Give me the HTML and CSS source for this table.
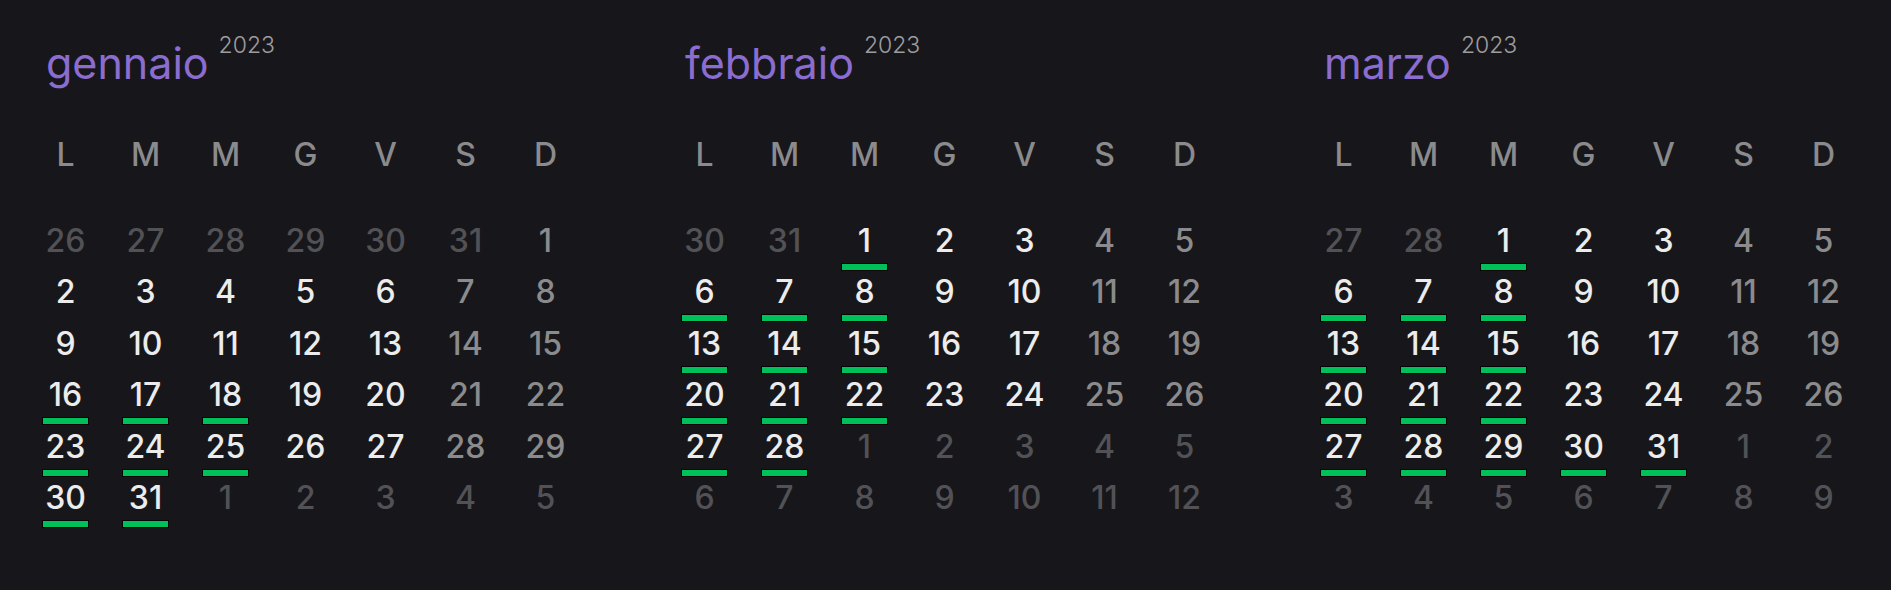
FILE: index.html
```html
<!DOCTYPE html>
<html lang="it">
<head>
    <meta charset="UTF-8">
    <meta name="viewport" content="width=device-width, initial-scale=1.0">
    <title>Calendario 2023</title>
    <link rel="stylesheet" href="styles.css">
</head>
<body>

<div class="months">

    <!-- Gennaio -->
    <div class="month">
        <div class="month-head">
            <div class="month-name">gennaio</div>
            <div class="month-year">2023</div>
        </div>
        <div class="weekdays">
            <span>L</span><span>M</span><span>M</span><span>G</span><span>V</span><span>S</span><span>D</span>
        </div>
        <div class="days">
            <span class="day other">26</span><span class="day other">27</span><span class="day other">28</span><span class="day other">29</span><span class="day other">30</span><span class="day other">31</span><span class="day weekend">1</span>
            <span class="day">2</span><span class="day">3</span><span class="day">4</span><span class="day">5</span><span class="day">6</span><span class="day weekend">7</span><span class="day weekend">8</span>
            <span class="day">9</span><span class="day">10</span><span class="day">11</span><span class="day">12</span><span class="day">13</span><span class="day weekend">14</span><span class="day weekend">15</span>
            <span class="day marked">16</span><span class="day marked">17</span><span class="day marked">18</span><span class="day">19</span><span class="day">20</span><span class="day weekend">21</span><span class="day weekend">22</span>
            <span class="day marked">23</span><span class="day marked">24</span><span class="day marked">25</span><span class="day">26</span><span class="day">27</span><span class="day weekend">28</span><span class="day weekend">29</span>
            <span class="day marked">30</span><span class="day marked">31</span><span class="day other">1</span><span class="day other">2</span><span class="day other">3</span><span class="day other">4</span><span class="day other">5</span>
        </div>
    </div>

    <!-- Febbraio -->
    <div class="month">
        <div class="month-head">
            <div class="month-name">febbraio</div>
            <div class="month-year">2023</div>
        </div>
        <div class="weekdays">
            <span>L</span><span>M</span><span>M</span><span>G</span><span>V</span><span>S</span><span>D</span>
        </div>
        <div class="days">
            <span class="day other">30</span><span class="day other">31</span><span class="day marked">1</span><span class="day">2</span><span class="day">3</span><span class="day weekend">4</span><span class="day weekend">5</span>
            <span class="day marked">6</span><span class="day marked">7</span><span class="day marked">8</span><span class="day">9</span><span class="day">10</span><span class="day weekend">11</span><span class="day weekend">12</span>
            <span class="day marked">13</span><span class="day marked">14</span><span class="day marked">15</span><span class="day">16</span><span class="day">17</span><span class="day weekend">18</span><span class="day weekend">19</span>
            <span class="day marked">20</span><span class="day marked">21</span><span class="day marked">22</span><span class="day">23</span><span class="day">24</span><span class="day weekend">25</span><span class="day weekend">26</span>
            <span class="day marked">27</span><span class="day marked">28</span><span class="day other">1</span><span class="day other">2</span><span class="day other">3</span><span class="day other">4</span><span class="day other">5</span>
            <span class="day other">6</span><span class="day other">7</span><span class="day other">8</span><span class="day other">9</span><span class="day other">10</span><span class="day other">11</span><span class="day other">12</span>
        </div>
    </div>

    <!-- Marzo -->
    <div class="month">
        <div class="month-head">
            <div class="month-name">marzo</div>
            <div class="month-year">2023</div>
        </div>
        <div class="weekdays">
            <span>L</span><span>M</span><span>M</span><span>G</span><span>V</span><span>S</span><span>D</span>
        </div>
        <div class="days">
            <span class="day other">27</span><span class="day other">28</span><span class="day marked">1</span><span class="day">2</span><span class="day">3</span><span class="day weekend">4</span><span class="day weekend">5</span>
            <span class="day marked">6</span><span class="day marked">7</span><span class="day marked">8</span><span class="day">9</span><span class="day">10</span><span class="day weekend">11</span><span class="day weekend">12</span>
            <span class="day marked">13</span><span class="day marked">14</span><span class="day marked">15</span><span class="day">16</span><span class="day">17</span><span class="day weekend">18</span><span class="day weekend">19</span>
            <span class="day marked">20</span><span class="day marked">21</span><span class="day marked">22</span><span class="day">23</span><span class="day">24</span><span class="day weekend">25</span><span class="day weekend">26</span>
            <span class="day marked">27</span><span class="day marked">28</span><span class="day marked">29</span><span class="day marked">30</span><span class="day marked">31</span><span class="day other">1</span><span class="day other">2</span>
            <span class="day other">3</span><span class="day other">4</span><span class="day other">5</span><span class="day other">6</span><span class="day other">7</span><span class="day other">8</span><span class="day other">9</span>
        </div>
    </div>

</div>

</body>
</html>
```

FILE: styles.css
```css
/* Color scheme */
:root {
    --bg: #17171b;
    --lavender: #8b6dcf;
    --text: #ececec;
    --muted: #8b8b8d;
    --faded: #525256;
    --green: #00c05a;
}

body {
    font-family: Inter, "Noto Sans", sans-serif;
    background-color: var(--bg);
    color: var(--text);
    margin: 0;
    padding: 0;
    min-height: 100vh;
}

.months {
    display: flex;
    gap: 112px;
    padding: 38px 0 0 42px;
}

.month {
    width: 527px;
    display: flex;
    flex-direction: column;
}

.month-head {
    display: flex;
    align-items: flex-start;
    padding-left: 4px;
}

.month-name {
    font-size: 43px;
    line-height: 50px;
    font-weight: 400;
    color: var(--lavender);
}

.month-year {
    font-size: 23px;
    line-height: 22px;
    font-weight: 300;
    color: #9d9d9f;
    margin: -4px 0 0 10px;
}

/* Grid */
.weekdays,
.days {
    display: grid;
    grid-template-columns: repeat(7, 47px);
    column-gap: 33px;
}

.weekdays {
    margin-top: 49px;
}

.weekdays span {
    text-align: center;
    font-size: 32px;
    line-height: 36px;
    font-weight: 500;
    color: var(--muted);
}

.days {
    margin-top: 50px;
    grid-auto-rows: 51.4px;
}

.day {
    display: flex;
    flex-direction: column;
    align-items: center;
    font-size: 32px;
    line-height: 36px;
    font-weight: 500;
    color: var(--text);
}

.day.weekend {
    color: var(--muted);
}

.day.other {
    color: var(--faded);
}

.day.marked::after {
    content: "";
    display: block;
    width: 45px;
    height: 6px;
    margin-top: 4px;
    background-color: var(--green);
    border: 1px solid #050505;
}
```
